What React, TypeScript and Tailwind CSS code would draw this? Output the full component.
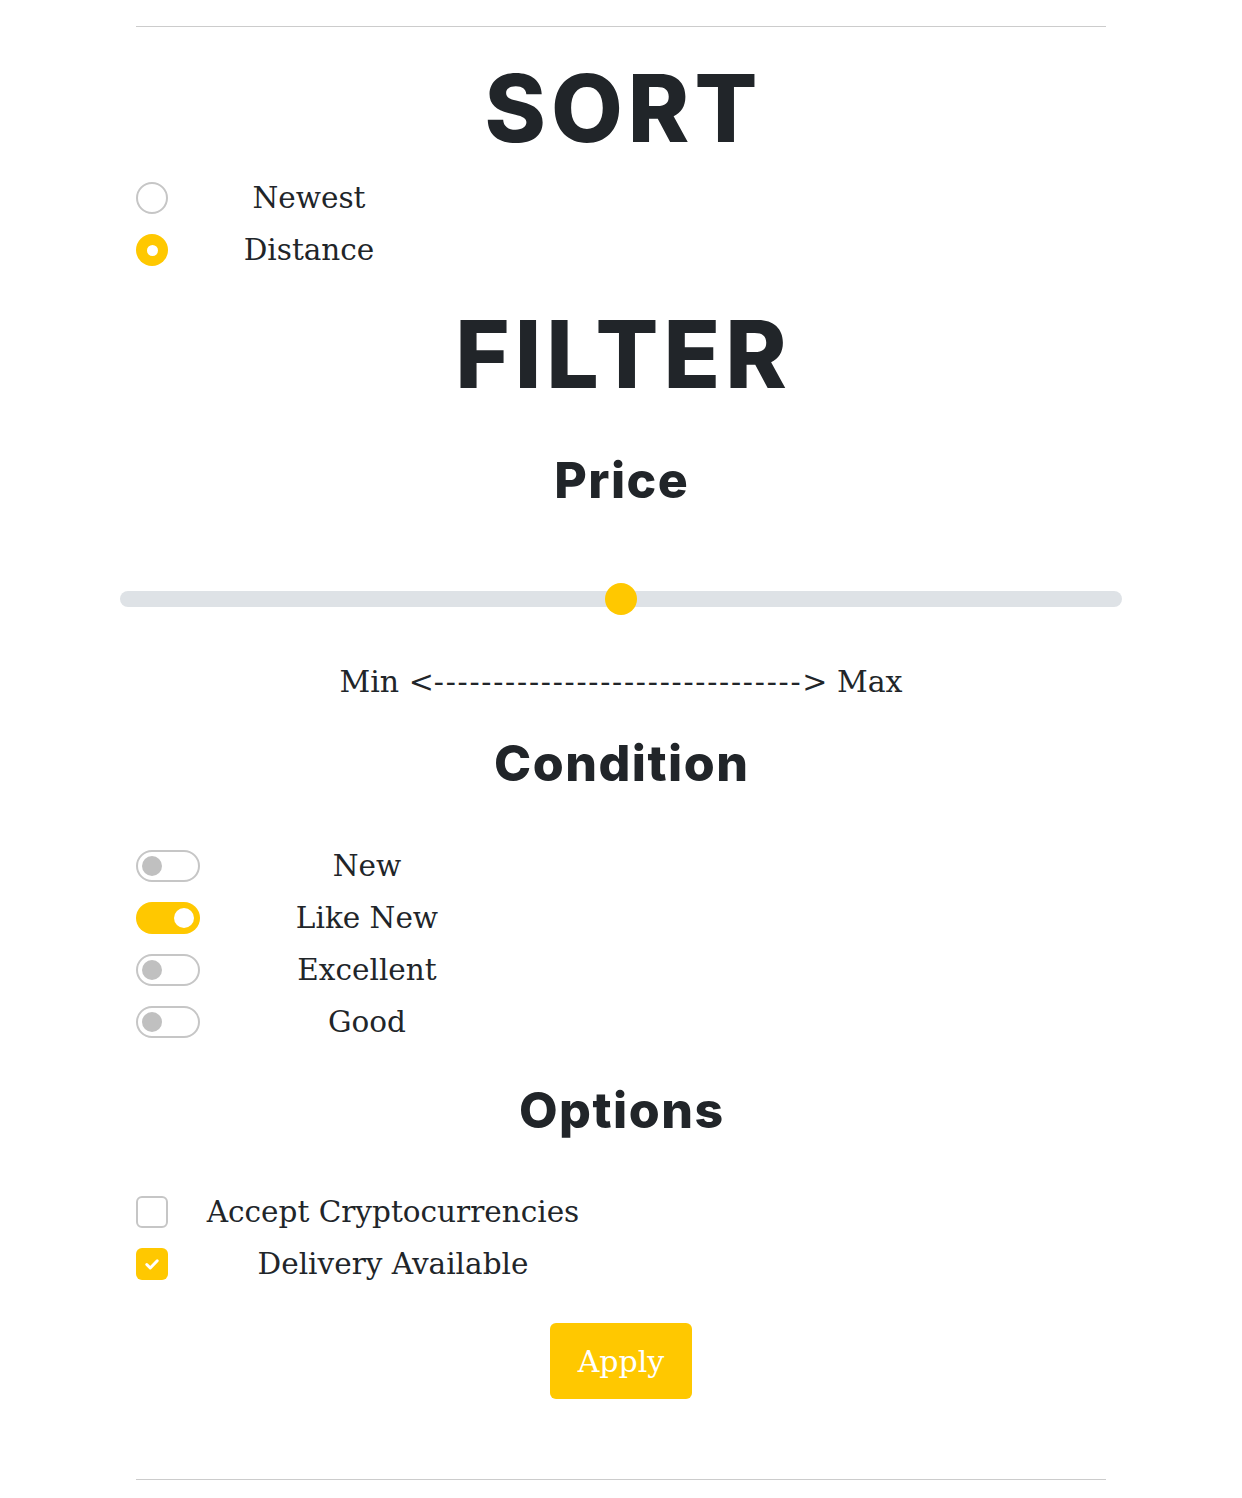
import React from "react";

const head = "font-['Inter',sans-serif] font-extrabold text-[#212529] text-center";
const body = "font-['DejaVu_Serif',serif] text-[#212529]";

const Radio = ({ on }: { on?: boolean }) =>
  on ? (
    <span className="w-8 h-8 rounded-full bg-[#ffc800] flex items-center justify-center">
      <span className="w-[11px] h-[11px] rounded-full bg-white" />
    </span>
  ) : (
    <span className="w-8 h-8 rounded-full border-2 border-[#c6c6c6] bg-white" />
  );

const Toggle = ({ on }: { on?: boolean }) =>
  on ? (
    <span className="w-16 h-8 rounded-full bg-[#ffc800] flex items-center justify-end pr-[6px]">
      <span className="w-5 h-5 rounded-full bg-white" />
    </span>
  ) : (
    <span className="w-16 h-8 rounded-full border-2 border-[#c6c6c6] bg-white flex items-center pl-[4px]">
      <span className="w-5 h-5 rounded-full bg-[#c0c0c0]" />
    </span>
  );

const Check = ({ on }: { on?: boolean }) =>
  on ? (
    <span className="w-8 h-8 rounded-md bg-[#ffc800] flex items-center justify-center">
      <svg width="20" height="20" viewBox="0 0 16 16" fill="none">
        <path d="M3.8 8.4l2.8 2.8 5.6-5.8" stroke="white" strokeWidth="2.4" strokeLinecap="round" strokeLinejoin="round" />
      </svg>
    </span>
  ) : (
    <span className="w-8 h-8 rounded-md border-2 border-[#c6c6c6] bg-white" />
  );

const Row = ({ input, label, w }: { input: React.ReactNode; label: string; w: string }) => (
  <div className="h-[52px] flex items-center">
    {input}
    <span className={`${body} text-[29.5px] text-center ${w}`}>{label}</span>
  </div>
);

export default function App() {
  return (
    <div className="bg-white min-h-[1498px] w-[1242px]">
      <div className="w-[970px] mx-auto pt-[26px]">
        <div className="border-t border-[#cccccc]" />
        <h1 className={`${head} text-[93px] tracking-[5px] pl-[5px] leading-none mt-[35px] h-[100px]`}>SORT</h1>
        <div className="mt-[10px]">
          <Row input={<Radio />} label="Newest" w="w-[282px]" />
          <Row input={<Radio on />} label="Distance" w="w-[282px]" />
        </div>
        <h1 className={`${head} text-[93px] tracking-[5px] pl-[5px] leading-none mt-[32px] h-[100px]`}>FILTER</h1>
        <h2 className={`${head} text-[50px] tracking-[1.5px] pl-[1.5px] leading-none mt-[47px]`}>Price</h2>
        <div className="-mx-4 mt-[86px] h-4 rounded-full bg-[#dee2e6] relative">
          <span className="absolute left-1/2 top-1/2 -translate-x-1/2 -translate-y-1/2 w-8 h-8 rounded-full bg-[#ffc800]" />
        </div>
        <p className={`${body} text-[30px] text-center mt-[52px]`}>
          Min &lt;<span className="tracking-[1.75px]">-------------------------------</span>&gt; Max
        </p>
        <h2 className={`${head} text-[50px] tracking-[1.5px] pl-[1.5px] leading-none mt-[34px]`}>Condition</h2>
        <div className="mt-[52px]">
          <Row input={<Toggle />} label="New" w="w-[334px]" />
          <Row input={<Toggle on />} label="Like New" w="w-[334px]" />
          <Row input={<Toggle />} label="Excellent" w="w-[334px]" />
          <Row input={<Toggle />} label="Good" w="w-[334px]" />
        </div>
        <h2 className={`${head} text-[50px] tracking-[1.5px] pl-[1.5px] leading-none mt-[37px]`}>Options</h2>
        <div className="mt-[51px]">
          <Row input={<Check />} label="Accept Cryptocurrencies" w="w-[450px]" />
          <Row input={<Check on />} label="Delivery Available" w="w-[450px]" />
        </div>
        <div className="flex justify-center mt-[33px]">
          <button className={`${body} text-[30px] text-white bg-[#ffc800] rounded-md w-[142px] h-[76px]`}>Apply</button>
        </div>
        <div className="border-t border-[#cccccc] mt-[80px]" />
      </div>
    </div>
  );
}
